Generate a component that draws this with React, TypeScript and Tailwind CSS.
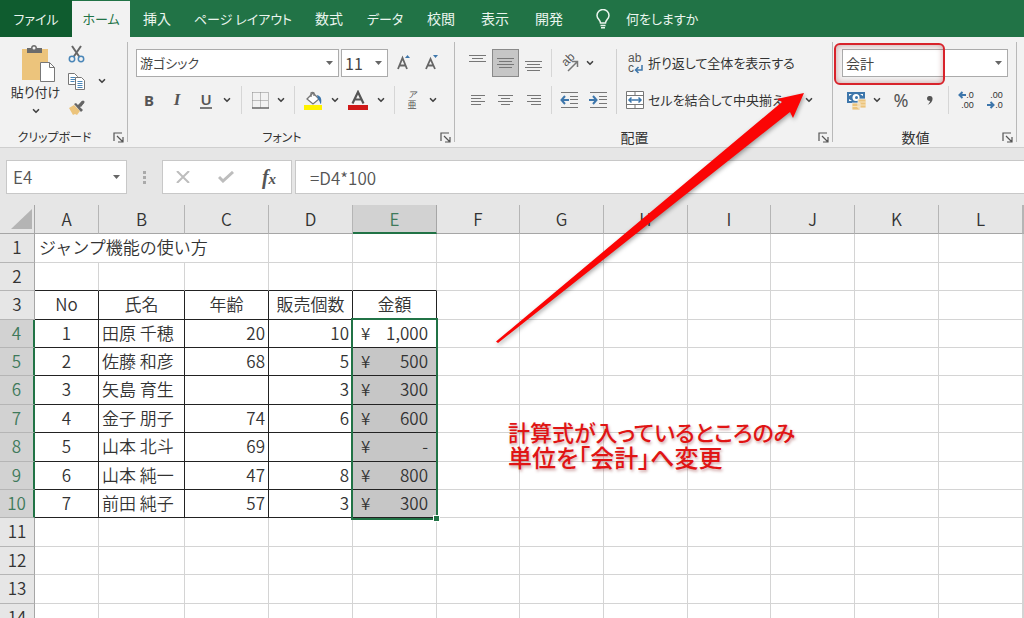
import type { ReactNode } from 'react';
import clsx from 'clsx';
import { ChevronDown } from 'lucide-react';

const tabs = [
  { name: '挿入', className: 'w-[54px] text-[14px]' },
  { name: 'ページ レイアウト', className: 'w-[118px] text-[13px]' },
  { name: '数式', className: 'w-[54px] text-[14px]' },
  { name: 'データ', className: 'w-[58px] text-[13px]' },
  { name: '校閲', className: 'w-[54px] text-[14px]' },
  { name: '表示', className: 'w-[54px] text-[14px]' },
  { name: '開発', className: 'w-[54px] text-[14px]' },
];

const columns = [
  { name: 'A', width: 'w-[64px]' },
  { name: 'B', width: 'w-[86px]' },
  { name: 'C', width: 'w-[84px]' },
  { name: 'D', width: 'w-[84px]' },
  { name: 'E', width: 'w-[84px]' },
  { name: 'F', width: 'w-[83px]' },
  { name: 'G', width: 'w-[84px]' },
  { name: 'H', width: 'w-[84px]' },
  { name: 'I', width: 'w-[83px]' },
  { name: 'J', width: 'w-[84px]' },
  { name: 'K', width: 'w-[84px]' },
  { name: 'L', width: 'w-[84px]' },
  { name: '', width: '' },
];

const sheetRows: Record<number, string[]> = {
  3: ['No', '氏名', '年齢', '販売個数', '金額'],
  4: ['1', '田原 千穂', '20', '10', '1,000'],
  5: ['2', '佐藤 和彦', '68', '5', '500'],
  6: ['3', '矢島 育生', '', '3', '300'],
  7: ['4', '金子 朋子', '74', '6', '600'],
  8: ['5', '山本 北斗', '69', '', '-'],
  9: ['6', '山本 純一', '47', '8', '800'],
  10: ['7', '前田 純子', '57', '3', '300'],
};

const rowNumbers = Array.from({ length: 14 }, (_, i) => i + 1);

const Caret = ({ className }: { className?: string }) => (
  <svg viewBox="0 0 7 4" className={clsx('h-1 w-[7px] fill-[#666]', className)}>
    <path d="M0 0h7L3.5 4z" />
  </svg>
);

const MenuButton = ({ label, className }: { label: string; className: string }) => (
  <button type="button" aria-label={label} className={clsx('flex h-7 shrink-0 items-center justify-center', className)}>
    <ChevronDown className="h-[10px] w-[10px] text-[#444]" strokeWidth={4} />
  </button>
);

const Tool = ({ label, className, children }: { label: string; className: string; children: ReactNode }) => (
  <button
    type="button"
    aria-label={label}
    className={clsx('flex h-7 shrink-0 items-center justify-center text-[#555]', className)}
  >
    {children}
  </button>
);

const Separator = ({ className }: { className: string }) => (
  <div className={clsx('h-7 w-px shrink-0 bg-[#d6d6d6]', className)} />
);

interface ComboProps {
  label: string;
  value: string;
  className: string;
}

const Combo = ({ label, value, className }: ComboProps) => (
  <div className={clsx('grid h-7 shrink-0 items-center border border-[#ababab] bg-white text-[#444]', className)}>
    <select
      aria-label={label}
      defaultValue={value}
      className="col-start-1 row-start-1 h-full w-full appearance-none bg-transparent pl-[3px] outline-none"
    >
      <option>{value}</option>
    </select>
    <Caret className="pointer-events-none col-start-1 row-start-1 mr-[5px] justify-self-end" />
  </div>
);

interface GroupProps {
  title: string;
  titleSize: string;
  className: string;
  children: ReactNode;
}

const Group = ({ title, titleSize, className, children }: GroupProps) => (
  <section className={clsx('relative flex h-[100px] shrink-0 flex-col border-r border-[#b9b9b9]', className)}>
    <div className="h-[84px]">{children}</div>
    <div className="flex h-4 items-start">
      <h2 className={clsx('flex-1 text-center leading-[22px] text-[#333]', titleSize)}>{title}</h2>
      <button type="button" aria-label={`${title}の設定`} className="flex h-5 w-[18px] items-center justify-center">
        <svg viewBox="0 0 11 11" className="mt-[3px] h-[11px] w-[11px] fill-none stroke-[#555]" strokeWidth="1.2">
          <path d="M1 9V1h8M4 4l5.5 5.5M10 5v5H5" />
        </svg>
      </button>
    </div>
  </section>
);

// Horizontal rules as [y, start, end]
const Lines = ({ lines, className }: { lines: [number, number, number][]; className?: string }) => (
  <svg viewBox="0 0 18 18" className={clsx('h-[18px] w-[18px] stroke-[#777]', className)}>
    {lines.map(([y, x1, x2]) => (
      <path key={y} d={`M${x1} ${y}.5H${x2}`} />
    ))}
  </svg>
);

const IndentIcon = ({ arrow }: { arrow: string }) => (
  <svg viewBox="0 0 18 18" className="h-[18px] w-[18px] fill-none stroke-[#777]">
    <path d="M1 1.5h17M10 5.5h8M10 8.5h8M10 12.5h8M1 16.5h17" />
    <path d={arrow} stroke="#3d76ab" strokeWidth="2" />
  </svg>
);

const TabBar = () => (
  <nav className="flex h-[37px] shrink-0 items-stretch bg-[#217346] text-[13px] text-[#eaf5ee]">
    <button type="button" className="w-[72px] bg-[#0f5c2f]">ファイル</button>
    <button type="button" className="mt-px w-[58px] bg-[#f2f2f2] text-[#217346]">ホーム</button>
    {tabs.map(({ name, className }) => (
      <button key={name} type="button" className={clsx('whitespace-nowrap', className)}>{name}</button>
    ))}
    <button type="button" className="ml-5 flex items-center gap-4 whitespace-nowrap">
      <svg viewBox="0 0 14 20" className="h-5 w-[14px] fill-none stroke-[#eaf5ee]" strokeWidth="1.5">
        <path d="M4.5 14c0-3-3.5-4-3.5-7.5a6 6 0 0 1 12 0C13 10 9.5 11 9.5 14zM4.5 16.5h5M5 18.8h4" />
      </svg>
      何をしますか
    </button>
  </nav>
);

const ClipboardGroup = () => (
  <Group title="クリップボード" titleSize="text-[12px]" className="w-[128px]">
    <div className="flex h-full pl-[10px]">
      <button type="button" className="flex w-[51px] flex-col items-center text-[13px] leading-5 whitespace-nowrap text-[#333]">
        <svg viewBox="0 0 34 38" className="mt-[2px] ml-1 h-[38px] w-[34px] shrink-0">
          <path fill="#ecc47c" d="M1 5h26v31H1z" />
          <path fill="#6b6b6b" d="M6 9V4h4c0-4 6-4 6 0h5v5z" />
          <circle cx="13" cy="4" r="1.5" fill="#f2f2f2" />
          <path fill="#fff" stroke="#777" d="M19.5 18.5h9l5 5v14h-14z" />
          <path fill="none" stroke="#777" d="M28.5 18.5v5h5" />
        </svg>
        <span>貼り付け</span>
        <ChevronDown className="mt-1 h-[10px] w-[10px] text-[#444]" strokeWidth={4} />
      </button>
      <div className="flex flex-col">
        <Tool label="切り取り" className="w-[30px]">
          <svg viewBox="0 0 17 18" className="-mt-1 h-[18px] w-[17px] fill-none" strokeWidth="1.5">
            <path d="M4 1l7.5 11M13 1L5.5 12" stroke="#666" strokeWidth="2" />
            <circle cx="4" cy="14" r="2.7" stroke="#4a86b8" />
            <circle cx="13" cy="14" r="2.7" stroke="#4a86b8" />
          </svg>
        </Tool>
        <div className="flex">
          <Tool label="コピー" className="w-[30px]">
            <svg viewBox="0 0 17 18" className="mt-[-6px] h-[18px] w-[17px] fill-white stroke-[#777]">
              <path d="M.5 1.5h6l3 3v8h-9z" />
              <path d="M2.5 5.5h5M2.5 7.5h5M2.5 9.5h4" stroke="#4a86b8" />
              <path d="M7.5 5.5h6l3 3v9h-9z" />
              <path d="M9.5 9.5h5M9.5 11.5h5M9.5 13.5h5M9.5 15.5h5" stroke="#4a86b8" />
            </svg>
          </Tool>
          <MenuButton label="コピーのオプション" className="mt-[-3px] w-[22px]" />
        </div>
        <Tool label="書式のコピー" className="w-[30px]">
          <svg viewBox="0 0 17 16" className="-mt-2 h-4 w-[17px] shrink-0">
            <path fill="#ecc47c" d="M1 8l5-3 6 6-3 4-2-1-2 1z" />
            <path fill="#666" d="M6 4l2-1 7 7-2 2zM11 5l3-4 2 2-3 4z" />
            <path stroke="#666" strokeWidth="3" strokeLinecap="round" d="M11 6l4-4" />
          </svg>
        </Tool>
      </div>
    </div>
  </Group>
);

const FontGroup = () => (
  <Group title="フォント" titleSize="text-[12px]" className="w-[327px]">
    <div className="flex flex-col gap-[9px] pt-[7px] pl-2">
      <div className="flex">
        <Combo label="フォント" value="游ゴシック" className="w-[203px] text-[13px]" />
        <Combo label="フォント サイズ" value="11" className="ml-[2px] w-[47px] text-[16px]" />
        <Tool label="フォント サイズの拡大" className="w-8">
          <svg viewBox="0 0 15 16" className="h-4 w-[15px] fill-none stroke-[#666]" strokeWidth="1.8">
            <path d="M1 14L5.5 3 10 14M2.5 10.5h6" />
            <path d="M8 3l2.5-3L13 3z" fill="#3d76ab" stroke="none" />
          </svg>
        </Tool>
        <Tool label="フォント サイズの縮小" className="w-6">
          <svg viewBox="0 0 15 16" className="h-4 w-[15px] fill-none stroke-[#666]" strokeWidth="1.8">
            <path d="M1 14L5.5 4 10 14M2.5 10.5h6" />
            <path d="M8 0h5l-2.5 3z" fill="#3d76ab" stroke="none" />
          </svg>
        </Tool>
      </div>
      <div className="flex">
        <Tool label="太字" className="w-[26px]">
          <b className="font-['Noto_Sans'] text-[15px]">B</b>
        </Tool>
        <Tool label="斜体" className="w-[30px]">
          <i className="font-['Liberation_Serif'] text-[17px] font-bold">I</i>
        </Tool>
        <Tool label="下線" className="w-7">
          <span className="border-b-2 border-[#777] font-['Noto_Sans'] text-[15px] leading-[15px] font-semibold">U</span>
        </Tool>
        <MenuButton label="下線の種類" className="w-[14px]" />
        <Separator className="mx-[7px]" />
        <Tool label="罫線" className="w-[22px]">
          <svg viewBox="0 0 17 17" className="h-[17px] w-[17px] fill-none stroke-[#888]">
            <path d="M.5.5h16v15M.5.5v15M8.5.5v15M.5 8.5h16" strokeDasharray="1 1" />
            <path d="M0 16h17" stroke="#666" strokeWidth="1.5" />
          </svg>
        </Tool>
        <MenuButton label="罫線の種類" className="w-5" />
        <Separator className="mx-[3px]" />
        <Tool label="塗りつぶしの色" className="w-[30px]">
          <svg viewBox="0 0 20 20" className="h-5 w-5">
            <path fill="#fff" stroke="#777" strokeWidth="1.3" d="M4 9l6-6 6 6-6 5z" />
            <path fill="none" stroke="#777" strokeWidth="1.3" d="M8 7V3a2 2 0 0 1 3 0v3" />
            <path fill="#3d76ab" d="M14 5c4 1 5 4 4 9-1 0-1-3-3-5z" />
            <path fill="#fff200" d="M1 15h18v5H1z" />
          </svg>
        </Tool>
        <MenuButton label="塗りつぶしの色の選択" className="w-[14px]" />
        <Tool label="フォントの色" className="w-8">
          <svg viewBox="0 0 20 20" className="h-5 w-5">
            <path fill="none" stroke="#555" strokeWidth="2.2" d="M4.5 13.5L10 2l5.5 11.5M6.5 9.5h7" />
            <path fill="#d01818" d="M0 15h20v5H0z" />
          </svg>
        </Tool>
        <MenuButton label="フォントの色の選択" className="w-[14px]" />
        <Separator className="mx-[6px]" />
        <Tool label="ふりがな" className="w-[22px]">
          <span className="flex flex-col text-[9px] leading-[10px]">
            <i>ア</i>
            <span>亜</span>
          </span>
        </Tool>
        <MenuButton label="ふりがなの設定" className="w-5" />
      </div>
    </div>
  </Group>
);

const AlignmentGroup = () => (
  <Group title="配置" titleSize="text-[14px]" className="w-[378px]">
    <div className="flex pt-[7px] pl-[9px]">
      <div className="flex flex-col gap-[9px]">
        <div className="flex gap-px">
          <Tool label="上揃え" className="w-[27px]">
            <Lines lines={[[5, 0, 17], [8, 3, 14], [11, 0, 17]]} className="-mt-2" />
          </Tool>
          <Tool label="上下中央揃え" className="w-[27px] border border-[#8a8a8a] bg-[#c6c6c6]">
            <Lines lines={[[4, 0, 17], [7, 2, 15], [10, 0, 17], [13, 2, 15]]} />
          </Tool>
          <Tool label="下揃え" className="w-[27px]">
            <Lines lines={[[7, 0, 17], [10, 2, 15], [13, 0, 17], [16, 2, 15]]} />
          </Tool>
          <Separator className="mr-[2px] ml-[3px]" />
          <Tool label="方向" className="w-7">
            <svg viewBox="0 0 24 24" className="h-6 w-6">
              <text transform="translate(9 16) rotate(-45)" className="fill-[#555] font-['Liberation_Sans'] text-[12px]">ab</text>
              <path fill="none" stroke="#777" strokeWidth="1.5" d="M11 20l9-9M15 10.5h5.5V16" />
            </svg>
          </Tool>
          <MenuButton label="方向の設定" className="w-3" />
        </div>
        <div className="flex gap-px">
          <Tool label="左揃え" className="w-[27px]">
            <Lines lines={[[4, 2, 16], [7, 2, 12], [10, 2, 16], [13, 2, 12]]} />
          </Tool>
          <Tool label="中央揃え" className="w-[27px]">
            <Lines lines={[[4, 1, 16], [7, 4, 13], [10, 1, 16], [13, 4, 13]]} />
          </Tool>
          <Tool label="右揃え" className="w-[27px]">
            <Lines lines={[[4, 2, 16], [7, 6, 16], [10, 2, 16], [13, 6, 16]]} />
          </Tool>
          <Separator className="mr-[2px] ml-[3px]" />
          <Tool label="インデントを減らす" className="w-7">
            <IndentIcon arrow="M9 9H2M5 5L1.5 9 5 13" />
          </Tool>
          <Tool label="インデントを増やす" className="w-7">
            <IndentIcon arrow="M0 9h7M4 5l3.5 4L4 13" />
          </Tool>
        </div>
      </div>
      <div className="mr-[9px] ml-1 h-[65px] w-px bg-[#d0d0d0]" />
      <div className="flex flex-1 flex-col gap-[9px] text-[13px] whitespace-nowrap text-[#333]">
        <button type="button" className="flex h-7 items-center gap-1">
          <span className="grid w-[18px] grid-cols-[auto_auto] justify-start pl-[2px] font-['Liberation_Sans'] text-[12px] leading-[10px] text-[#555]">
            <span className="col-span-2 text-left">ab</span>
            <span>c</span>
            <svg viewBox="0 0 9 9" className="mt-[2px] h-[9px] w-[9px] fill-none stroke-[#3d76ab]" strokeWidth="1.5">
              <path d="M8 0v5H2M4.5 2L1.5 5l3 3" />
            </svg>
          </span>
          折り返して全体を表示する
        </button>
        <div className="flex">
          <button type="button" className="flex h-7 items-center gap-1">
            <svg viewBox="0 0 18 18" className="h-[18px] w-[18px] fill-none stroke-[#777]">
              <path fill="#fff" d="M.5.5h17v17H.5zM.5 4.5h17M.5 13.5h17M9 .5v4M9 13.5v4" />
              <path stroke="#3d76ab" strokeWidth="1.5" d="M3 9h12M5.5 6.5L3 9l2.5 2.5M12.5 6.5L15 9l-2.5 2.5" />
            </svg>
            セルを結合して中央揃え
          </button>
          <MenuButton label="セル結合の種類" className="mr-4 ml-auto w-[14px]" />
        </div>
      </div>
    </div>
  </Group>
);

const NumberGroup = () => (
  <Group title="数値" titleSize="text-[14px]" className="w-[184px]">
    <div className="flex flex-col gap-[9px] pt-[7px] pl-[9px]">
      <Combo label="表示形式" value="会計" className="w-[166px] text-[14px]" />
      <div className="flex">
        <Tool label="会計表示形式" className="w-7">
          <svg viewBox="0 0 19 19" className="h-[19px] w-[19px]">
            <path fill="#3d76ab" d="M0 1h18v11H0z" />
            <path fill="#fff" d="M2 3h3L2 5zM16 3h-3l3 2zM2 10h3L2 8z" />
            <circle cx="9" cy="6.5" r="3.5" fill="#fff" />
            <circle cx="9.5" cy="6.5" r="1.5" fill="#3d76ab" />
            <path fill="#ecc47c" stroke="#f2f2f2" strokeWidth=".8" d="M11 8h8v9h-8zM5 12h8v7H5z" />
            <path stroke="#f7e4bf" d="M11 11h8M11 14h8M5 15.5h8" />
          </svg>
        </Tool>
        <MenuButton label="通貨の選択" className="w-[14px]" />
        <Tool label="パーセント スタイル" className="w-[34px]">
          <span className="font-['Noto_Sans'] text-[18px]">%</span>
        </Tool>
        <Tool label="桁区切りスタイル" className="w-6">
          <svg viewBox="0 0 6 9" className="h-[9px] w-[6px] fill-[#555]">
            <path d="M0 2.5A2.5 2.5 0 0 1 3 0c4 0 3.5 7-2.5 9C2 7.5 3 6 3 5 1 5 0 4 0 2.5z" />
          </svg>
        </Tool>
        <Separator className="mr-px ml-[6px]" />
        <Tool label="小数点以下の表示桁数を増やす" className="w-8">
          <span className="flex flex-col items-end font-['Liberation_Sans'] text-[9px] leading-[10px] text-[#333]">
            <span className="flex items-center">
              <svg viewBox="0 0 8 8" className="h-2 w-2 fill-none stroke-[#3d76ab]" strokeWidth="2">
                <path d="M8 4H2M4.5 1L1.5 4l3 3" />
              </svg>
              .0
            </span>
            <span>.00</span>
          </span>
        </Tool>
        <Tool label="小数点以下の表示桁数を減らす" className="w-[26px]">
          <span className="flex flex-col items-end font-['Liberation_Sans'] text-[9px] leading-[10px] text-[#333]">
            <span>.00</span>
            <span className="flex items-center">
              <svg viewBox="0 0 8 8" className="h-2 w-2 fill-none stroke-[#3d76ab]" strokeWidth="2">
                <path d="M0 4h6M3.5 1l3 3-3 3" />
              </svg>
              .0
            </span>
          </span>
        </Tool>
      </div>
    </div>
    {/* Highlight around the number format */}
    <div className="pointer-events-none absolute top-px left-px h-[42px] w-[111px] rounded-md border-2 border-[#d8232b] shadow-[inset_0_0_6px_rgba(120,0,0,0.35)]" />
  </Group>
);

const FormulaBar = () => (
  <div className="flex h-[58px] shrink-0 items-center border-t border-[#cfcfcf] bg-[#e6e6e6] pt-px pl-[6px] text-[17px] text-[#555]">
    <div className="flex h-[34px] w-[121px] items-center border border-[#c8c8c8] bg-white">
      <input aria-label="名前ボックス" defaultValue="E4" className="w-0 flex-1 pl-[6px] font-[350] outline-none" />
      <button type="button" aria-label="名前の一覧" className="flex h-full w-5 items-center justify-center">
        <Caret />
      </button>
    </div>
    <svg viewBox="0 0 3 13" className="mx-[16px] h-[13px] w-[3px] fill-[#aaa]">
      <path d="M0 0h3v3H0zM0 5h3v3H0zM0 10h3v3H0z" />
    </svg>
    <div className="flex h-[34px] w-[130px] items-center border border-[#c8c8c8] bg-white">
      <Tool label="キャンセル" className="w-10">
        <svg viewBox="0 0 14 12" className="h-3 w-[14px] fill-none stroke-[#bdbdbd]" strokeWidth="2">
          <path d="M1 0l12 12M13 0L1 12" />
        </svg>
      </Tool>
      <Tool label="入力" className="w-[46px]">
        <svg viewBox="0 0 16 12" className="h-3 w-4 fill-none stroke-[#bdbdbd]" strokeWidth="3">
          <path d="M1 6l4 4L15 1" />
        </svg>
      </Tool>
      <Tool label="関数の挿入" className="w-10">
        <i className="font-['Liberation_Serif'] text-[20px] font-bold">f</i>
        <i className="mt-1 font-['Liberation_Serif'] text-[15px] font-bold">x</i>
      </Tool>
    </div>
    <input
      aria-label="数式バー"
      defaultValue="=D4*100"
      className="ml-[3px] h-[34px] min-w-0 flex-1 border border-r-0 border-[#c8c8c8] bg-white pl-[14px] font-[350] outline-none"
    />
  </div>
);

const inSelectedRows = (row: number) => row >= 4 && row <= 10;

// Row pitch alternates between 28 and 29 pixels
const rowHeight = (row: number) => ([1, 3].includes(row % 5) ? 'h-[29px]' : 'h-7');

const SheetCell = ({ row, col }: { row: number; col: number }) => {
  const text = sheetRows[row]?.[col] ?? '';
  const framed = row >= 3 && row <= 10 && col < 5;
  const frameBelow = row >= 2 && row <= 10 && col < 5;
  const amount = col === 4 && inSelectedRows(row);

  return (
    <td
      className={clsx(
        'relative border-r border-b p-0 pb-[2px] whitespace-nowrap',
        framed ? 'border-r-[#222]' : 'border-r-[#d4d4d4]',
        frameBelow ? 'border-b-[#222]' : 'border-b-[#d4d4d4]',
        row === 3 || col === 0 ? 'text-center' : col === 1 ? 'pl-[3px] text-left' : 'pr-[3px] text-right',
        amount && row > 4 && 'bg-[#c6c6c6]',
      )}
    >
      {amount ? (
        <div className="flex justify-between pr-[5px] pl-2">
          <span>¥</span>
          <span>{text}</span>
        </div>
      ) : (
        text
      )}
      {/* Selection frame over E4:E10 */}
      {amount && row === 4 && (
        <div className="pointer-events-none absolute -top-[2px] -left-[2px] z-10 h-[202px] w-[87px] border-2 border-[#217346]">
          <div className="absolute -right-[4px] -bottom-[4px] h-[7px] w-[7px] border border-white bg-[#217346]" />
        </div>
      )}
    </td>
  );
};

const Sheet = () => (
  <div className="min-h-0 flex-1 overflow-hidden bg-white">
    <table className="w-full table-fixed border-separate border-spacing-0 text-[17px] leading-5 font-[350] text-[#333]">
      <colgroup>
        <col className="w-[35px]" />
        {columns.map(({ name, width }) => (
          <col key={name} className={width} />
        ))}
      </colgroup>
      <thead>
        <tr className="h-[29px] bg-[#e6e6e6]">
          <th className="border-r border-b border-[#a6a6a6] p-0">
            <svg viewBox="0 0 21 20" className="ml-[11px] h-5 w-[21px] fill-[#b4b4b4]">
              <path d="M21 0v20H0z" />
            </svg>
          </th>
          {columns.map(({ name }) => (
            <th
              key={name}
              className={clsx(
                'border-r p-0 font-[350]',
                name === 'E'
                  ? 'border-b-2 border-r-[#a6a6a6] border-b-[#217346] bg-[#d2d2d2] text-[#3f7a5b]'
                  : 'border-b border-r-[#b5b5b5] border-b-[#a6a6a6]',
              )}
            >
              {name}
            </th>
          ))}
        </tr>
      </thead>
      <tbody>
        {rowNumbers.map((row) => (
          <tr key={row} className={rowHeight(row)}>
            <th
              className={clsx(
                'border-b border-b-[#b5b5b5] p-0 pb-[2px] font-[350]',
                inSelectedRows(row)
                  ? 'border-r-2 border-r-[#217346] bg-[#d2d2d2] text-[#3f7a5b]'
                  : 'border-r border-r-[#a6a6a6] bg-[#e6e6e6]',
              )}
            >
              {row}
            </th>
            {row === 1 && (
              <td colSpan={3} className="border-r border-b border-[#d4d4d4] p-0 pb-[2px] pl-1">ジャンプ機能の使い方</td>
            )}
            {columns.map(({ name }, col) => (row === 1 && col < 3 ? null : <SheetCell key={name} row={row} col={col} />))}
          </tr>
        ))}
      </tbody>
    </table>
  </div>
);

const Annotations = () => (
  <>
    <svg
      viewBox="0 0 320 262"
      className="pointer-events-none absolute top-[86px] left-[492px] z-20 h-[262px] w-[320px] drop-shadow-[1px_2px_2px_rgba(0,0,0,0.35)]"
    >
      <path fill="#fb0505" d="M4 255.5L290 16l-5-3 27-6-11 25-3-6L6 257z" />
    </svg>
    <p className="pointer-events-none absolute top-[418px] left-[508px] z-20 text-[24px] leading-[26px] font-medium whitespace-nowrap text-[#e01414] [text-shadow:1px_2px_3px_rgba(120,0,0,0.35)]">
      <span className="block text-[22px]">計算式が入っているところのみ</span>
      単位を「会計」へ変更
    </p>
  </>
);

export default function App() {
  return (
    <main
      lang="ja"
      className="relative flex h-screen flex-col overflow-hidden bg-[#e6e6e6] font-['Noto_Sans_CJK_JP',sans-serif]"
    >
      <div className="[font-feature-settings:'palt']">
        <TabBar />
        <div className="flex h-[110px] items-center bg-[#f2f2f2]">
          <ClipboardGroup />
          <FontGroup />
          <AlignmentGroup />
          <NumberGroup />
        </div>
      </div>
      <FormulaBar />
      <Sheet />
      <div className="[font-feature-settings:'palt']">
        <Annotations />
      </div>
    </main>
  );
}
